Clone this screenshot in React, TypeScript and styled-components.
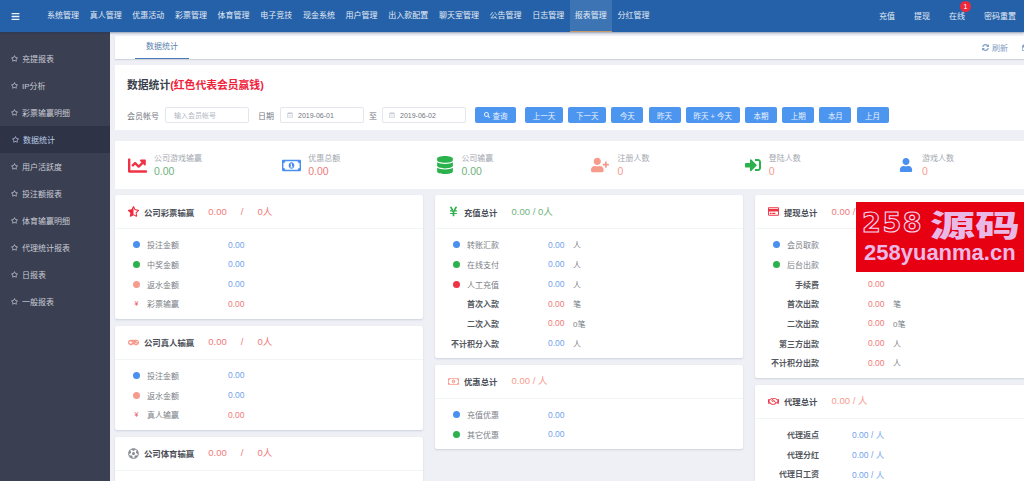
import React from "react";
import styled, { createGlobalStyle } from "styled-components";
import {
  FaBars, FaRegStar, FaChartLine, FaRegMoneyBillAlt, FaDatabase, FaUserPlus, FaSignInAlt, FaUser,
  FaFutbol, FaYenSign, FaRegCreditCard, FaRegHandshake, FaSearch, FaRegCalendarAlt, FaSyncAlt, FaRegWindowRestore, FaGamepad, FaStarHalfAlt,
} from "react-icons/fa";

const Global = createGlobalStyle`
  html, body { margin: 0; height: 100%; overflow: hidden; background: #eef0f5; }
  body { font-family: "Liberation Sans", "Noto Sans CJK SC", sans-serif; }
  #root { height: 100%; }
  * { box-sizing: border-box; }
`;

const Page = styled.div`
  position: relative;
  width: 1024px;
  height: 481px;
  overflow: hidden;
  display: flex;
  flex-direction: column;
`;
const TopBar = styled.header`
  height: 32px;
  flex: none;
  background: #2561a8;
  box-shadow: 0 1px 2px rgba(30, 50, 90, 0.45);
  display: flex;
  align-items: stretch;
  color: #e4ecf6;
  font-size: 8px;
  position: relative;
  z-index: 2;
`;
const Burger = styled.div`
  width: 41.67px;
  padding-left: 11px;
  display: flex;
  align-items: center;
  font-size: 9px;
  color: #eef3fa;
`;
const NavList = styled.nav`
  display: flex;
  flex: 1;
`;
const NavItem = styled.div<{ $active?: boolean }>`
  padding: 0 5.33px 2px;
  display: flex;
  align-items: center;
  white-space: nowrap;
  background: ${(p) => (p.$active ? "#3c74b4" : "transparent")};
  border-bottom: 1px solid ${(p) => (p.$active ? "#c89a6a" : "transparent")};
`;
const RightNav = styled.div`
  display: flex;
  gap: 19px;
  padding-right: 8px;
  align-items: center;
  padding-bottom: 1px;
`;
const RightItem = styled.span`
  position: relative;
  white-space: nowrap;
`;
const Badge = styled.span`
  position: absolute;
  left: 11px;
  top: -9px;
  width: 11px;
  height: 11px;
  border-radius: 50%;
  background: #ee2a3a;
  color: #fff;
  font-size: 7px;
  line-height: 11px;
  text-align: center;
`;
const Body = styled.div`
  flex: 1;
  display: flex;
  min-height: 0;
`;
const Side = styled.aside`
  width: 110px;
  flex: none;
  background: #3a3f51;
  padding-top: 13px;
`;
const SideItem = styled.div<{ $active?: boolean }>`
  height: 27px;
  display: flex;
  align-items: center;
  gap: 4px;
  padding-left: ${(p) => (p.$active ? "12px" : "11px")};
  font-size: 8px;
  color: ${(p) => (p.$active ? "#b9cbe6" : "#c9ccd6")};
  background: ${(p) => (p.$active ? "#2e3346" : "transparent")};
  svg { font-size: 7px; flex: none; }
`;
const Main = styled.main`
  width: 948px;
  flex: none;
  padding: 4px 0 0 5px;
  margin-right: -34px;
  display: flex;
  flex-direction: column;
`;
const TabBar = styled.div`
  width: 943px;
  height: 23px;
  flex: none;
  background: #fff;
  display: flex;
  justify-content: space-between;
  box-shadow: 0 1px 1px rgba(120, 130, 150, 0.25);
  padding: 0 0 0 20px;
`;
const Tab = styled.div`
  width: 54px;
  text-align: center;
  line-height: 22px;
  font-size: 8px;
  color: #5b7fae;
  border-bottom: 1px solid #4a78b8;
`;
const TabTools = styled.div`
  display: flex;
  align-items: center;
  font-size: 8px;
  color: #7f9cc4;
  gap: 3px;
  padding-right: 29px;
  svg { font-size: 7px; }
`;
const ToolGap = styled.span`
  width: 8px;
`;
const Panel = styled.section`
  background: #fff;
  width: 943px;
  flex: none;
`;
const SearchPanel = styled(Panel)`
  margin-top: 6px;
  height: 65px;
  padding: 13px 12px 0;
`;
const Title = styled.h1`
  margin: 0 0 15px;
  font-size: 10.8px;
  line-height: 14px;
  font-weight: 700;
  color: #3a3f4b;
`;
const TitleNote = styled.span`
  color: #f0233c;
`;
const FormRow = styled.div`
  display: flex;
  align-items: center;
  height: 16px;
  font-size: 8px;
  color: #73777f;
`;
const FormLabel = styled.span<{ $gap: number }>`
  margin-right: ${(p) => p.$gap}px;
  white-space: nowrap;
`;
const TextInput = styled.input`
  width: 84px;
  height: 16px;
  border: 1px solid #e3e6ec;
  border-radius: 2px;
  padding: 0 8px;
  font: 7px "Liberation Sans", "Noto Sans CJK SC", sans-serif;
  color: #6b7078;
  margin-right: 9px;
  outline: none;
  &::placeholder { color: #b3b7bf; }
`;
const DateBox = styled.label<{ $gap: number }>`
  width: 84px;
  height: 16px;
  border: 1px solid #e3e6ec;
  border-radius: 2px;
  padding: 0 6px;
  display: flex;
  align-items: center;
  gap: 5px;
  margin-right: ${(p) => p.$gap}px;
  color: #c3c8d2;
  svg { font-size: 6px; flex: none; }
`;
const DateInput = styled.input`
  width: 60px;
  border: 0;
  padding: 0;
  font: 7px "Liberation Sans", sans-serif;
  color: #72767e;
  outline: none;
`;
const Btn = styled.button`
  height: 16px;
  min-width: 32px;
  padding: 0 7.75px;
  margin-right: 5.2px;
  border: 0;
  border-radius: 2px;
  background: #4d96f0;
  color: #eaf2fd;
  font: 7.5px "Liberation Sans", "Noto Sans CJK SC", sans-serif;
  white-space: nowrap;
  display: flex;
  align-items: center;
  justify-content: center;
  gap: 3px;
  svg { font-size: 6px; }
`;
const SearchBtn = styled(Btn)`
  width: 41px;
  margin-right: 9px;
  padding: 0;
`;
const StatPanel = styled(Panel)`
  margin-top: 11px;
  height: 48px;
  padding-left: 13px;
  display: grid;
  grid-template-columns: repeat(6, 154.2px);
  align-items: center;
`;
const Stat = styled.div`
  display: flex;
  align-items: center;
`;
const StatIcon = styled.div<{ $color: string; $size: number; $width: number }>`
  width: ${(p) => p.$width}px;
  display: flex;
  color: ${(p) => p.$color};
  font-size: ${(p) => p.$size}px;
`;
const StatLabel = styled.div`
  font-size: 8px;
  line-height: 12px;
  color: #a3a7b0;
`;
const StatValue = styled.div<{ $color: string }>`
  font-size: 10.5px;
  line-height: 13px;
  color: ${(p) => p.$color};
`;
const Columns = styled.div`
  margin-top: 6px;
  flex: none;
  display: grid;
  grid-template-columns: repeat(3, 308px);
  column-gap: 12px;
  align-items: start;
`;
const Column = styled.div`
  display: flex;
  flex-direction: column;
  gap: 7px;
`;
const Card = styled.article`
  background: #fff;
  border-radius: 2px;
  box-shadow: 0 1px 2px rgba(130, 140, 165, 0.3);
`;
const CardHead = styled.header`
  height: 34px;
  padding-left: 13px;
  display: flex;
  align-items: center;
  border-bottom: 1px solid #f2f4f8;
`;
const HeadIcon = styled.span<{ $color: string }>`
  width: 16px;
  display: flex;
  color: ${(p) => p.$color};
  font-size: 11px;
`;
const HeadTitle = styled.span`
  font-size: 8.4px;
  font-weight: 700;
  color: #4a4e57;
  margin-right: 14px;
  white-space: nowrap;
`;
const HeadValue = styled.span<{ $color: string; $gap?: number }>`
  display: flex;
  align-items: baseline;
  gap: ${(p) => p.$gap ?? 0}px;
  font-size: 9.5px;
  line-height: 12px;
  color: ${(p) => p.$color};
  white-space: pre;
`;
const CardBody = styled.div`
  padding: 6px 0 5px;
`;
const Row = styled.div<{ $wide?: boolean }>`
  height: 19.67px;
  display: grid;
  grid-template-columns: 64px ${(p) => (p.$wide ? "33px" : "49px")} 25px auto;
  align-items: center;
  font-size: 8px;
  color: #7a7e86;
`;
const RowLabel = styled.div<{ $strong?: boolean }>`
  display: flex;
  align-items: center;
  justify-content: flex-end;
  white-space: nowrap;
  color: ${(p) => (p.$strong ? "#55595f" : "#7a7e86")};
  font-weight: ${(p) => (p.$strong ? 700 : 400)};
`;
const Dot = styled.i<{ $color: string }>`
  width: 7px;
  height: 7px;
  border-radius: 50%;
  margin-right: 7px;
  background: ${(p) => p.$color};
`;
const Yen = styled.i`
  width: 7px;
  margin-right: 7px;
  font-style: normal;
  font-size: 7px;
  text-align: center;
  color: #ee5566;
`;
const RowAmount = styled.div<{ $color: string; $wide?: boolean }>`
  grid-column: ${(p) => (p.$wide ? "3 / 5" : "3")};
  font-size: 8.5px;
  white-space: nowrap;
  color: ${(p) => p.$color};
`;

const BLUE = "#4a90f0", GREEN = "#2bb24c", SALMON = "#f79b8c", RED = "#ee3344";
const VB = "#74a3ec", VR = "#f07a7a", VG = "#6fb27a";
const NAV = ["系统管理","真人管理","优惠活动","彩票管理","体育管理","电子竞技","现金系统","用户管理","出入款配置","聊天室管理","公告管理","日志管理","报表管理","分红管理"];
const SIDE = ["充提报表","IP分析","彩票输赢明细","数据统计","用户活跃度","投注额报表","体育输赢明细","代理统计报表","日报表","一般报表"];
const QUICK = ["上一天","下一天","今天","昨天","昨天 + 今天","本期","上期","本月","上月"];

type RowData = { label: string; mark?: string; value?: string; color?: string; unit?: string; strong?: boolean };
const rows = (...r: RowData[]) => r;

const DataRow = ({ r, wide }: { r: RowData; wide?: boolean }) => (
  <Row $wide={wide}>
    <RowLabel $strong={r.strong}>
      {r.mark === "yen" ? <Yen>¥</Yen> : r.mark ? <Dot $color={r.mark} /> : null}
      {r.label}
    </RowLabel>
    <RowAmount $color={r.color ?? VB} $wide={wide}>{r.value ?? "0.00"}</RowAmount>
    {r.unit ? <span>{r.unit}</span> : null}
  </Row>
);

const StatCell = ({ icon, color, size, width, label, value, vColor }: { icon: React.ReactNode; color: string; size: number; width: number; label: string; value: string; vColor: string }) => (
  <Stat>
    <StatIcon $color={color} $size={size} $width={width}>{icon}</StatIcon>
    <div>
      <StatLabel>{label}</StatLabel>
      <StatValue $color={vColor}>{value}</StatValue>
    </div>
  </Stat>
);

const InfoCard = ({ icon, iconColor, title, value, vColor, gap, list, wide }: { icon: React.ReactNode; iconColor: string; title: string; value: string[]; vColor: string; gap?: number; list: RowData[]; wide?: boolean }) => (
  <Card>
    <CardHead>
      <HeadIcon $color={iconColor}>{icon}</HeadIcon>
      <HeadTitle>{title}</HeadTitle>
      <HeadValue $color={vColor} $gap={gap}>{value.map((v) => <span key={v}>{v}</span>)}</HeadValue>
    </CardHead>
    <CardBody>{list.map((r) => <DataRow key={r.label} r={r} wide={wide} />)}</CardBody>
  </Card>
);

const WatermarkBox = styled.div`
  position: absolute;
  left: 856px;
  top: 202px;
  width: 168px;
  height: 70px;
  background: #e60012;
  color: #eab8e4;
  font-weight: 700;
  overflow: hidden;
  z-index: 3;
`;
const WmTop = styled.div`
  display: flex;
  align-items: center;
  height: 38px;
  padding: 4px 0 0 6px;
  white-space: nowrap;
`;
const WmDigits = styled.span`
  color: #e60012;
  -webkit-text-stroke: 1.1px #f5d5f0;
  font: 700 27px/30px "DejaVu Sans", sans-serif;
  letter-spacing: 1.6px;
  width: 68px;
`;
const WmHan = styled.span`
  display: inline-block;
  width: 90px;
  font: 900 30px/32px "Noto Sans CJK SC", sans-serif;
  transform: scaleX(1.5);
  transform-origin: left center;
`;
const WmBottom = styled.div`
  padding-left: 8px;
  font: 700 22px/26px "Liberation Sans", sans-serif;
  white-space: nowrap;
`;

export default function App() {
  return (
    <Page>
      <Global />
      <TopBar>
        <Burger><FaBars /></Burger>
        <NavList>
          {NAV.map((n) => <NavItem key={n} $active={n === "报表管理"}>{n}</NavItem>)}
        </NavList>
        <RightNav>
          <RightItem>充值</RightItem>
          <RightItem>提现</RightItem>
          <RightItem>在线<Badge>1</Badge></RightItem>
          <RightItem>密码重置</RightItem>
        </RightNav>
      </TopBar>
      <Body>
        <Side>
          {SIDE.map((s) => <SideItem key={s} $active={s === "数据统计"}><FaRegStar />{s}</SideItem>)}
        </Side>
        <Main>
          <TabBar>
            <Tab>数据统计</Tab>
            <TabTools><FaSyncAlt />刷新<ToolGap /><FaRegWindowRestore /></TabTools>
          </TabBar>
          <SearchPanel>
            <Title>数据统计<TitleNote>(红色代表会员赢钱)</TitleNote></Title>
            <FormRow>
              <FormLabel $gap={6}>会员帐号</FormLabel>
              <TextInput placeholder="输入会员帐号" />
              <FormLabel $gap={6}>日期</FormLabel>
              <DateBox $gap={5}><FaRegCalendarAlt /><DateInput readOnly value="2019-06-01" /></DateBox>
              <FormLabel $gap={5}>至</FormLabel>
              <DateBox $gap={9}><FaRegCalendarAlt /><DateInput readOnly value="2019-06-02" /></DateBox>
              <SearchBtn><FaSearch />查询</SearchBtn>
              {QUICK.map((q) => <Btn key={q}>{q}</Btn>)}
            </FormRow>
          </SearchPanel>
          <StatPanel>
            <StatCell icon={<FaChartLine />} color="#ee3344" size={19} width={26} label="公司游戏输赢" value="0.00" vColor={VG} />
            <StatCell icon={<FaRegMoneyBillAlt />} color={BLUE} size={19} width={26} label="优惠总额" value="0.00" vColor={VR} />
            <StatCell icon={<FaDatabase />} color={GREEN} size={18} width={25} label="公司输赢" value="0.00" vColor={VG} />
            <StatCell icon={<FaUserPlus />} color={SALMON} size={18} width={27} label="注册人数" value="0" vColor={SALMON} />
            <StatCell icon={<FaSignInAlt />} color={GREEN} size={16} width={24} label="登陆人数" value="0" vColor={SALMON} />
            <StatCell icon={<FaUser />} color={BLUE} size={14} width={23} label="游戏人数" value="0" vColor={SALMON} />
          </StatPanel>
          <Columns>
            <Column>
              <InfoCard icon={<FaStarHalfAlt />} iconColor="#ee2a3a" title="公司彩票输赢" value={["0.00", "/", "0人"]} vColor={VR} gap={14} list={rows(
                { label: "投注金额", mark: BLUE }, { label: "中奖金额", mark: GREEN }, { label: "返水金额", mark: SALMON }, { label: "彩票输赢", mark: "yen", color: VR })} />
              <InfoCard icon={<FaGamepad />} iconColor={SALMON} title="公司真人输赢" value={["0.00", "/", "0人"]} vColor={VR} gap={14} list={rows(
                { label: "投注金额", mark: BLUE }, { label: "返水金额", mark: SALMON }, { label: "真人输赢", mark: "yen", color: VR })} />
              <InfoCard icon={<FaFutbol />} iconColor="#8a8e96" title="公司体育输赢" value={["0.00", "/", "0人"]} vColor={VR} gap={14} list={[]} />
            </Column>
            <Column>
              <InfoCard icon={<FaYenSign />} iconColor={GREEN} title="充值总计" value={["0.00 / 0人"]} vColor={VG} list={rows(
                { label: "转账汇款", mark: BLUE, unit: "人" }, { label: "在线支付", mark: GREEN, unit: "人" }, { label: "人工充值", mark: RED, unit: "人" },
                { label: "首次入款", strong: true, color: VR, unit: "笔" }, { label: "二次入款", strong: true, color: VR, unit: "0笔" }, { label: "不计积分入款", strong: true, unit: "人" })} />
              <InfoCard icon={<FaRegMoneyBillAlt />} iconColor={SALMON} title="优惠总计" value={["0.00 / 人"]} vColor={SALMON} list={rows(
                { label: "充值优惠", mark: BLUE }, { label: "其它优惠", mark: GREEN })} />
            </Column>
            <Column>
              <InfoCard icon={<FaRegCreditCard />} iconColor="#ee3344" title="提现总计" value={["0.00 / 0人"]} vColor={VR} list={rows(
                { label: "会员取款", mark: BLUE, unit: "人" }, { label: "后台出款", mark: GREEN, unit: "人" }, { label: "手续费", strong: true, color: VR },
                { label: "首次出款", strong: true, color: VR, unit: "笔" }, { label: "二次出款", strong: true, color: VR, unit: "0笔" },
                { label: "第三方出款", strong: true, color: VR, unit: "人" }, { label: "不计积分出款", strong: true, color: VR, unit: "人" })} />
              <InfoCard icon={<FaRegHandshake />} iconColor="#ee3344" title="代理总计" value={["0.00 / 人"]} vColor={SALMON} wide list={rows(
                { label: "代理返点", strong: true, value: "0.00 / 人" }, { label: "代理分红", strong: true, value: "0.00 / 人" }, { label: "代理日工资", strong: true, value: "0.00 / 人" })} />
            </Column>
          </Columns>
        </Main>
      </Body>
      <WatermarkBox>
        <WmTop><WmDigits>258</WmDigits><WmHan>源码</WmHan></WmTop>
        <WmBottom>258yuanma.cn</WmBottom>
      </WatermarkBox>
    </Page>
  );
}
